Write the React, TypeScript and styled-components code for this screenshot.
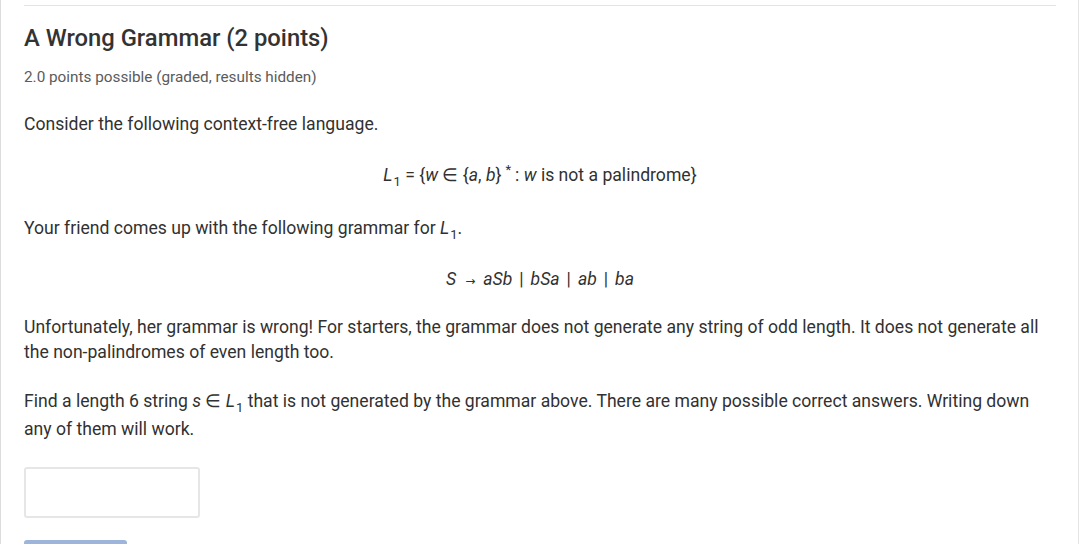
import React from "react";
import styled, { createGlobalStyle } from "styled-components";

const Global = createGlobalStyle`
  html, body { margin: 0; padding: 0; background: #fff; }
  body { font-family: Roboto, "Noto Sans", "Liberation Sans", sans-serif; color: #313131; }
`;

const Frame = styled.div`
  height: 544px;
  border-left: 1px solid #dcdcdc;
  border-right: 1px solid #e4e4e4;
  overflow: hidden;
  padding: 0 22px 0 23px;
  width: 1032px;
`;

const Rule = styled.div`
  height: 1px;
  background: #e3e3e3;
  margin-top: 5px;
`;

const Title = styled.h3`
  margin: 16px 0 0;
  font-size: 23.8px;
  font-weight: 500;
  line-height: 32px;
  color: #333;
`;

const Meta = styled.div`
  margin-top: 14px;
  font-size: 15.3px;
  line-height: 18px;
  color: #5b5b5b;
`;

const Para = styled.p<{ $top: number }>`
  margin: ${(p) => p.$top}px 0 0;
  font-size: 17.6px;
  line-height: 25px;
  color: #313131;
`;

const Display = styled.div<{ $top: number }>`
  margin-top: ${(p) => p.$top}px;
  text-align: center;
  font-size: 17.6px;
  line-height: 25px;
  color: #313131;
`;

const V = styled.i`
  font-style: italic;
`;

const Sub = styled.sub<{ $grow?: boolean }>`
  font-size: 13px;
  line-height: ${(p) => (p.$grow ? "18px" : "0")};
  vertical-align: -5px;
  margin-left: 1px;
`;

const Sup = styled.sup`
  font-size: 13px;
  line-height: 0;
  vertical-align: 7px;
  margin: 0 4px 0 4px;
`;

const Arrow = styled.span`
  font-family: "DejaVu Sans", sans-serif;
  font-size: 12px;
  line-height: 0;
  margin: 0 8px 0 9px;
`;

const Bar = styled.span`
  margin: 0 7px;
`;

const Input = styled.input`
  display: block;
  margin-top: 25px;
  width: 176px;
  height: 51px;
  box-sizing: border-box;
  border: 2px solid #e6e6e6;
  border-radius: 3px;
  background: #fff;
  outline: none;
`;

const Submit = styled.button`
  display: block;
  margin-top: 22px;
  width: 103px;
  height: 36px;
  border: none;
  border-radius: 3px;
  background: #9db5da;
`;

export default function App() {
  return (
    <>
      <Global />
      <Frame>
        <Rule />
        <Title>A Wrong Grammar (2 points)</Title>
        <Meta>2.0 points possible (graded, results hidden)</Meta>
        <Para $top={26}>Consider the following context-free language.</Para>
        <Display $top={26}>
          <V>L</V>
          <Sub>1</Sub> = {"{"}
          <V>w</V> ∈ {"{"}
          <V>a</V>, <V>b</V>
          {"}"}
          <Sup>*</Sup>: <V>w</V> is not a palindrome{"}"}
        </Display>
        <Para $top={28}>
          Your friend comes up with the following grammar for <V>L</V>
          <Sub>1</Sub>.
        </Para>
        <Display $top={26}>
          <V>S</V>
          <Arrow>→</Arrow>
          <V>aSb</V>
          <Bar>|</Bar>
          <V>bSa</V>
          <Bar>|</Bar>
          <V>ab</V>
          <Bar>|</Bar>
          <V>ba</V>
        </Display>
        <Para $top={23}>
          Unfortunately, her grammar is wrong! For starters, the grammar does not generate any string of odd
          length. It does not generate all the non-palindromes of even length too.
        </Para>
        <Para $top={24}>
          Find a length 6 string <V>s</V> ∈ <V>L</V>
          <Sub $grow>1</Sub> that is not generated by the grammar above. There are many possible correct
          answers. Writing down any of them will work.
        </Para>
        <Input aria-label="answer" />
        <Submit aria-label="Submit" />
      </Frame>
    </>
  );
}
